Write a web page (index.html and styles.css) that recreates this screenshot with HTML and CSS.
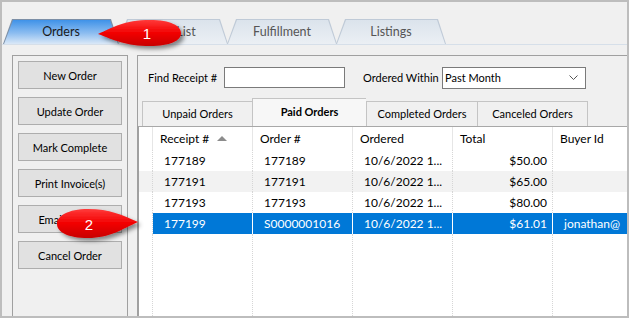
FILE: index.html
```html
<!DOCTYPE html>
<html lang="en">
<head>
    <meta charset="UTF-8">
    <title>Orders</title>
    <link rel="stylesheet" href="styles.css">
</head>
<body>
    <div class="window">
        <!-- main tabs -->
        <div class="app-tabs">
            <div class="app-tab active">Orders</div>
            <div class="app-tab">Pick List</div>
            <div class="app-tab">Fulfillment</div>
            <div class="app-tab">Listings</div>
        </div>

        <div class="content">
            <!-- order actions -->
            <div class="side">
                <button class="btn">New Order</button>
                <button class="btn">Update Order</button>
                <button class="btn">Mark Complete</button>
                <button class="btn">Print Invoice(s)</button>
                <button class="btn">Email Invoice</button>
                <button class="btn">Cancel Order</button>
            </div>

            <div class="main">
                <div class="filter">
                    <span class="lbl-find">Find Receipt #</span>
                    <input type="text" class="find-input">
                    <span class="lbl-within">Ordered Within</span>
                    <div class="select">
                        <span>Past Month</span>
                        <svg class="chev" width="9" height="5" viewBox="0 0 9 5"><polyline points="0.5,0.5 4.5,4.5 8.5,0.5" fill="none" stroke="#555" stroke-width="1"/></svg>
                    </div>
                </div>

                <div class="subtabs">
                    <div class="subtab w110">Unpaid Orders</div>
                    <div class="subtab selected w114">Paid Orders</div>
                    <div class="subtab w111">Completed Orders</div>
                    <div class="subtab w111">Canceled Orders</div>
                </div>

                <!-- orders grid -->
                <div class="grid">
                    <div class="row head">
                        <div class="cell rh"></div>
                        <div class="cell">Receipt # <span class="sort"></span></div>
                        <div class="cell">Order #</div>
                        <div class="cell">Ordered</div>
                        <div class="cell">Total</div>
                        <div class="cell">Buyer Id</div>
                    </div>
                    <div class="row">
                        <div class="cell rh"></div>
                        <div class="cell">177189</div>
                        <div class="cell">177189</div>
                        <div class="cell">10/6/2022 1...</div>
                        <div class="cell num">$50.00</div>
                        <div class="cell"></div>
                    </div>
                    <div class="row alt">
                        <div class="cell rh"></div>
                        <div class="cell">177191</div>
                        <div class="cell">177191</div>
                        <div class="cell">10/6/2022 1...</div>
                        <div class="cell num">$65.00</div>
                        <div class="cell"></div>
                    </div>
                    <div class="row">
                        <div class="cell rh"></div>
                        <div class="cell">177193</div>
                        <div class="cell">177193</div>
                        <div class="cell">10/6/2022 1...</div>
                        <div class="cell num">$80.00</div>
                        <div class="cell"></div>
                    </div>
                    <div class="row sel">
                        <div class="cell rh"></div>
                        <div class="cell">177199</div>
                        <div class="cell">S0000001016</div>
                        <div class="cell">10/6/2022 1...</div>
                        <div class="cell num">$61.01</div>
                        <div class="cell">jonathan@</div>
                    </div>
                    <div class="row filler">
                        <div class="cell rh"></div>
                        <div class="cell"></div>
                        <div class="cell"></div>
                        <div class="cell"></div>
                        <div class="cell"></div>
                        <div class="cell"></div>
                    </div>
                </div>
            </div>
        </div>

        <!-- step callouts -->
        <svg class="callouts" width="629" height="318" viewBox="0 0 629 318">
            <defs>
                <linearGradient id="red" x1="0" y1="0" x2="0" y2="1">
                    <stop offset="0" stop-color="#ff3a3a"/>
                    <stop offset="0.5" stop-color="#f20000"/>
                    <stop offset="1" stop-color="#c80000"/>
                </linearGradient>
                <filter id="shadow" x="-20%" y="-40%" width="150%" height="190%">
                    <feDropShadow dx="3" dy="3" stdDeviation="2" flood-color="#000" flood-opacity="0.45"/>
                </filter>
            </defs>
            <g filter="url(#shadow)" fill="url(#red)">
                <path d="M98 34 C112 28 124 20 150 20 C171 20 181 26 181 33 C181 41 170 46 150 46 C126 46 114 40 98 34 Z"/>
                <path d="M138 222 C122 215 110 209 88 209 C68 209 57 216 57 224 C57 232 68 238 88 238 C110 238 122 229 138 222 Z"/>
            </g>
            <text x="147" y="39" class="num-label">1</text>
            <text x="89" y="230" class="num-label">2</text>
        </svg>
    </div>
</body>
</html>
```

FILE: styles.css
```css
* {
    margin: 0;
    padding: 0;
    box-sizing: border-box;
}

body {
    font-family: 'Lato', 'Noto Sans', sans-serif;
    font-size: 11px;
    color: #000;
    background: #fff;
}

.window {
    position: relative;
    width: 629px;
    height: 318px;
    border: 2px solid #bdbdbd;
    background: #f0f0f0;
    overflow: hidden;
    display: flex;
    flex-direction: column;
    white-space: nowrap;
}

/* top tabs */
.app-tabs {
    display: flex;
    height: 43px;
    padding: 17px 0 0 1px;
    border-bottom: 1px solid #d6dfe9;
}

.app-tab {
    position: relative;
    z-index: 0;
    width: 110px;
    height: 25px;
    margin-right: -1px;
    display: flex;
    align-items: center;
    justify-content: center;
    color: #555;
    font-size: 12.5px;
}

.app-tab.active {
    width: 116px;
    color: #1a1a1a;
}

.app-tab::before,
.app-tab::after {
    content: "";
    position: absolute;
    z-index: -1;
    clip-path: polygon(9px 0, calc(100% - 8px) 0, 100% 100%, 0 100%);
}

.app-tab::before {
    inset: 0;
    background: #bfcad7;
}

.app-tab::after {
    inset: 1px 1px 0 1px;
    background: linear-gradient(#dbe3ec, #ebeff4);
}

.app-tab.active::before {
    background: #7c8fa6;
}

.app-tab.active::after {
    background: linear-gradient(#3f92e8, #8dbdf0 55%, #dae8f7);
}

/* body */
.content {
    flex: 1;
    display: flex;
    gap: 9px;
    padding: 10px 0 0 10px;
    min-height: 0;
}

.side {
    width: 116px;
    border: 1px solid #a0a0a0;
    border-bottom: none;
    padding: 5px;
    display: flex;
    flex-direction: column;
    gap: 8px;
}

.btn {
    height: 28px;
    background: #e1e1e1;
    border: 1px solid #adadad;
    font: inherit;
    color: #000;
}

.main {
    flex: 1;
    min-width: 0;
    border: 1px solid #a0a0a0;
    border-right: none;
    border-bottom: none;
    display: flex;
    flex-direction: column;
}

.filter {
    display: flex;
    align-items: center;
    height: 21px;
    margin: 11px 0 0 10px;
}

.lbl-find {
    width: 76px;
}

.find-input {
    width: 121px;
    height: 21px;
    border: 1px solid #7a7a7a;
    background: #fff;
}

.lbl-within {
    width: 79px;
    margin-left: 18px;
}

.select {
    width: 144px;
    height: 22px;
    border: 1px solid #7a7a7a;
    background: #fff;
    display: flex;
    align-items: center;
    justify-content: space-between;
    padding: 0 7px 0 2px;
}

.chev {
    display: block;
}

/* sub tabs */
.subtabs {
    display: flex;
    align-items: flex-end;
    height: 28px;
    margin: 10px 0 0 4px;
}

.subtab {
    height: 25px;
    border: 1px solid #c4c4c4;
    border-bottom: none;
    border-right: none;
    background: #f0f0f0;
    display: flex;
    align-items: center;
    justify-content: center;
    padding-bottom: 2px;
}

.subtab:last-child {
    border-right: 1px solid #c4c4c4;
}

.subtab.selected {
    height: 28px;
    background: #f7f7f7;
    font-weight: bold;
    padding-bottom: 3px;
}

.w110 { width: 110px; }
.w111 { width: 111px; }
.w114 { width: 114px; }

/* grid */
.grid {
    flex: 1;
    display: flex;
    flex-direction: column;
    background: #fff;
    border-top: 1px solid #a8a8a8;
    border-left: 1px solid #a0a0a0;
}

.row {
    display: grid;
    grid-template-columns: 14px repeat(5, 100px);
    height: 21px;
    font-size: 12px;
}

.row.head {
    height: 23px;
}

.cell {
    overflow: hidden;
    display: flex;
    align-items: center;
    padding-left: 11px;
    border-right: 1px dotted #d6d6d6;
}

.cell.rh {
    padding: 0;
}

.head .cell {
    padding-left: 7px;
    border-right: 1px solid #e6e6e6;
}

.cell.num {
    justify-content: flex-end;
    padding-right: 5px;
}

.row.alt {
    background: #f2f2f2;
}

.row.sel .cell {
    background: #0078d7;
    color: #fff;
    border-right: 1px solid #fff;
}

.row.sel .cell.rh {
    background: #fff;
    border-right: 1px dotted #d6d6d6;
}

.row.filler {
    flex: 1;
    height: auto;
}

.sort {
    display: inline-block;
    margin-left: 8px;
    border-left: 5px solid transparent;
    border-right: 5px solid transparent;
    border-bottom: 5px solid #8c8c8c;
}

/* callouts */
.callouts {
    position: absolute;
    left: -2px;
    top: -2px;
    pointer-events: none;
}

.num-label {
    font-family: 'Liberation Sans', Arial, sans-serif;
    font-size: 15px;
    fill: #fff;
    text-anchor: middle;
}
```
